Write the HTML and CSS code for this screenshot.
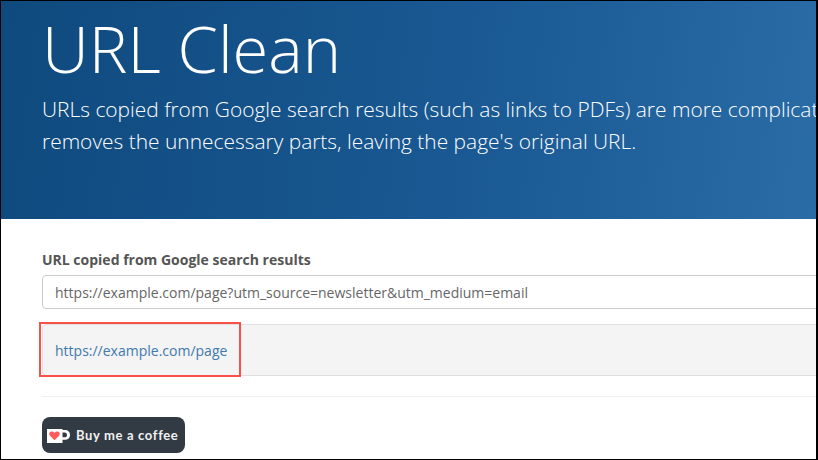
FILE: index.html
```html
<!DOCTYPE html>
<html lang="en">
<head>
    <meta charset="UTF-8">
    <meta name="viewport" content="width=device-width, initial-scale=1.0">
    <title>URL Clean</title>
    <link rel="stylesheet" href="styles.css">
</head>
<body>
    <div class="frame">
        <header class="hero">
            <h1>URL Clean</h1>
            <p>URLs copied from Google search results (such as links to PDFs) are more complicated than they need to be. This tool<br>removes the unnecessary parts, leaving the page's original URL.</p>
        </header>
        <main class="content">
            <label class="field-label" for="url">URL copied from Google search results</label>
            <input class="url-input" id="url" type="text" value="https://example.com/page?utm_source=newsletter&amp;utm_medium=email">
            <div class="result">
                <a href="#">https://example.com/page</a>
                <span class="highlight"></span>
            </div>
            <hr class="divider">
            <a class="coffee" href="#">
                <svg class="cup" width="23" height="15" viewBox="0 0 23 15">
                    <path fill="#fff" d="M0 1h15.500v1h2.500c3 0 5 2 5 5s-2 4.800-5 4.800h-2.500V15H0z"/>
                    <path fill="#323a44" d="M15.500 4.500h2.300c1.300 0 2.200 1 2.200 2.400s-.9 2.300-2.200 2.300h-2.300z"/>
                    <path fill="#ff5b5b" d="M7.500 12.300 3.200 8C2 6.700 2 5.100 3 4.100c1.100-1 2.900-1 4.500.7 1.600-1.700 3.400-1.700 4.500-.7 1 1 1 2.600-.2 3.900z"/>
                </svg>
                <span>Buy me a coffee</span>
            </a>
        </main>
    </div>
</body>
</html>
```

FILE: styles.css
```css
* {
    box-sizing: border-box;
}
html, body {
    height: 100%;
}
body {
    margin: 0;
    font-family: "Open Sans", Arial, sans-serif;
    background: #fff;
    overflow: hidden;
}
.frame {
    height: 460px;
    border: 1px solid #000;
    border-right-width: 2px;
    overflow: hidden;
}
.hero {
    width: 816px;
    height: 218px;
    padding: 0 0 0 41px;
    background: linear-gradient(97deg, #0f4a7e 0%, #195892 55%, #2a6ca6 100%);
    color: #fff;
    overflow: hidden;
}
.hero h1 {
    margin: 0;
    padding-top: 7px;
    font-size: 65px;
    font-weight: 300;
    line-height: 80px;
    white-space: nowrap;
}
.hero p {
    margin: 5px 0 0;
    width: 1200px;
    font-size: 20.93px;
    font-weight: 300;
    line-height: 32px;
}
.content {
    width: 1100px;
    padding: 32px 0 0 41px;
    color: #555;
}
.field-label {
    display: block;
    font-size: 14px;
    font-weight: 700;
    line-height: 18px;
    color: #555;
}
.url-input {
    display: block;
    width: 100%;
    height: 34px;
    margin-top: 6px;
    padding: 0 12px;
    border: 1px solid #ccc;
    border-radius: 4px;
    font-family: inherit;
    font-size: 14px;
    color: #666;
}
.result {
    position: relative;
    height: 52px;
    margin-top: 15px;
    padding: 0 12px;
    background: #f4f4f4;
    border: 1px solid #e0e0e0;
    border-radius: 4px;
    display: flex;
    align-items: center;
    font-size: 14px;
}
.result a {
    color: #4179ad;
    text-decoration: none;
}
.highlight {
    position: absolute;
    left: -4px;
    top: -3px;
    width: 202px;
    height: 55px;
    border: 2px solid #f9504a;
}
.divider {
    height: 1px;
    margin: 20px 0 20px;
    border: 0;
    background: #eee;
}
.coffee {
    display: inline-flex;
    align-items: center;
    gap: 6px;
    width: 143px;
    height: 36px;
    padding-left: 5px;
    background: #323a44;
    border-radius: 8px;
    color: #f2f2f2;
    text-decoration: none;
    font-family: Lato, sans-serif;
    font-size: 13px;
    font-weight: 700;
    letter-spacing: 0.65px;
}
.cup {
    flex: none;
}
```
